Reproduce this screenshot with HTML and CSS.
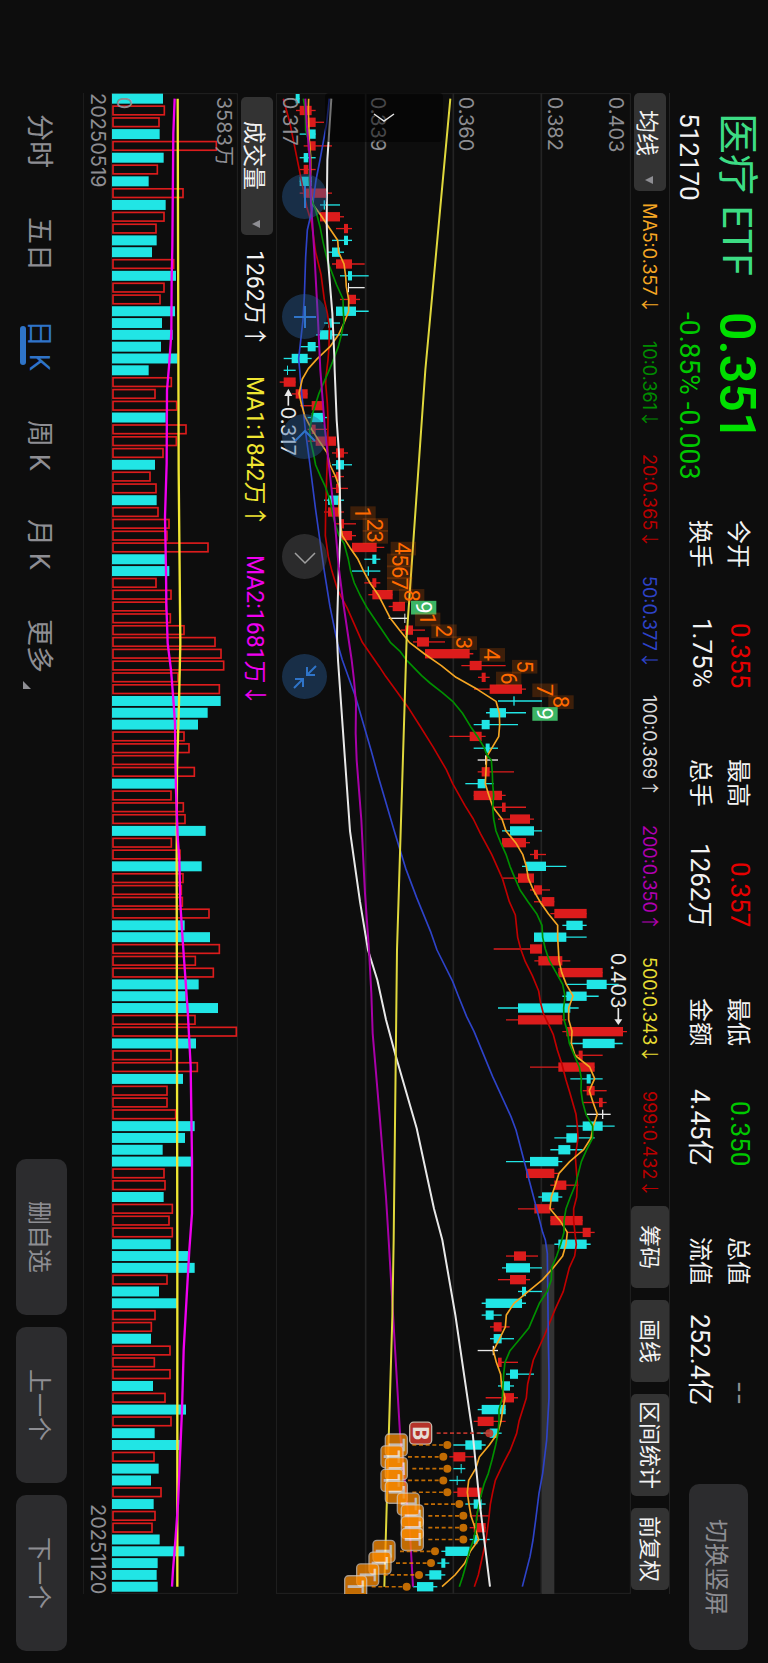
FILE: index.html
```html
<!DOCTYPE html>
<html lang="zh-CN">
<head>
<meta charset="utf-8">
<meta name="viewport" content="width=device-width, initial-scale=1">
<title>医疗 ETF 512170</title>
<link rel="stylesheet" href="styles.css">
</head>
<body>
<main class="screen">
  <header class="quote">
    <div class="quote-main">
      <h1 class="name">医疗 ETF</h1>
      <strong class="price">0.351</strong>
      <span class="code">512170</span>
      <span class="change">-0.85% -0.003</span>
    </div>
    <dl class="stats">
      <div class="stat"><dt>今开</dt><dd class="up">0.355</dd></div>
      <div class="stat"><dt>换手</dt><dd>1.75%</dd></div>
      <div class="stat"><dt>最高</dt><dd class="up">0.357</dd></div>
      <div class="stat"><dt>总手</dt><dd>1262万</dd></div>
      <div class="stat"><dt>最低</dt><dd class="down">0.350</dd></div>
      <div class="stat"><dt>金额</dt><dd>4.45亿</dd></div>
      <div class="stat"><dt>总值</dt><dd class="none">--</dd></div>
      <div class="stat"><dt>流值</dt><dd>252.4亿</dd></div>
    </dl>
    <button class="btn btn-rotate" type="button">切换竖屏</button>
  </header>

  <section class="ma-row">
    <button class="picker" type="button"><span>均线</span><svg class="caret" viewBox="0 0 8 8" aria-hidden="true"><path d="M0 4 8 0V8Z"/></svg></button>
    <div class="ma-list">
      <span class="ma5">MA5:0.357<i>↓</i></span>
      <span class="ma10">10:0.361<i>↓</i></span>
      <span class="ma20">20:0.365<i>↓</i></span>
      <span class="ma50">50:0.377<i>↓</i></span>
      <span class="ma100">100:0.369<i>↑</i></span>
      <span class="ma200">200:0.350<i>↑</i></span>
      <span class="ma500">500:0.343<i>↓</i></span>
      <span class="ma999">999:0.432<i>↓</i></span>
    </div>
    <div class="tools">
      <button class="tool" type="button">筹码</button>
      <button class="tool" type="button">画线</button>
      <button class="tool" type="button">区间统计</button>
      <button class="tool" type="button">前复权</button>
    </div>
  </section>

  <section class="chart">
    <svg id="price" class="plot" viewBox="18 39 1065 4503" role="img" aria-label="日K"></svg>
    <button class="drawer" type="button" aria-label="展开"><svg viewBox="0 0 24 12" aria-hidden="true"><path d="M2 2 12 9 22 2"/></svg></button>
    <div class="controls">
      <button class="round" type="button" aria-label="缩小"><svg viewBox="0 0 24 24" aria-hidden="true"><path d="M12 1V23"/></svg></button>
      <button class="round" type="button" aria-label="放大"><svg viewBox="0 0 24 24" aria-hidden="true"><path d="M12 1V23M1 12H23"/></svg></button>
      <button class="round" type="button" aria-label="左移"><svg viewBox="0 0 24 24" aria-hidden="true"><path d="M2 16 12 6 22 16"/></svg></button>
      <button class="round muted" type="button" aria-label="右移"><svg viewBox="0 0 24 24" aria-hidden="true"><path d="M2 8 12 18 22 8"/></svg></button>
      <button class="round" type="button" aria-label="收起"><svg viewBox="0 0 24 24" aria-hidden="true"><path d="M23 1 14 10M14 2V10H22M1 23 10 14M2 14H10V22"/></svg></button>
    </div>
  </section>

  <section class="vol-row">
    <button class="picker picker-vol" type="button"><span>成交量</span><svg class="caret" viewBox="0 0 8 8" aria-hidden="true"><path d="M0 4 8 0V8Z"/></svg></button>
    <span>1262万↑</span>
    <span class="vma1">MA1:1842万↑</span>
    <span class="vma2">MA2:1681万↓</span>
  </section>

  <section class="chart">
    <svg id="volume" class="plot" viewBox="333 39 381 4503" role="img" aria-label="成交量"></svg>
  </section>

  <div class="dates"><time>20250519</time><time>20251120</time></div>

  <footer class="bar">
    <nav class="tabs">
      <button class="tab" type="button">分时</button>
      <button class="tab" type="button">五日</button>
      <button class="tab active" type="button">日 K</button>
      <button class="tab" type="button">周 K</button>
      <button class="tab" type="button">月 K</button>
      <button class="tab more" type="button">更多<svg class="corner" viewBox="0 0 8 8" aria-hidden="true"><path d="M0 0V8H8Z"/></svg></button>
    </nav>
    <div class="actions">
      <button class="btn" type="button">删自选</button>
      <button class="btn" type="button">上一个</button>
      <button class="btn" type="button">下一个</button>
    </div>
  </footer>
</main>
<script src="chart.js"></script>
</body>
</html>
```
FILE: styles.css
```css
* { box-sizing: border-box; }

body {
  margin: 0;
  background: #0d0d0d;
  color: #f2f2f2;
  font-family: Roboto, "Noto Sans CJK SC", sans-serif;
}

button {
  margin: 0;
  padding: 0;
  border: 0;
  background: none;
  color: inherit;
  font: inherit;
  writing-mode: inherit;
  text-orientation: inherit;
  white-space: nowrap;
}

/* The view is landscape: inline axis runs down, block axis runs right to left. */
.screen {
  writing-mode: vertical-rl;
  text-orientation: sideways;
  display: grid;
  grid-template-rows: 98px 39px minmax(0, 355fr) 38px minmax(0, 127fr) 28px 83px;
  grid-template-columns: minmax(0, 1fr);
  width: 100%;
  min-height: 100vh;
  white-space: nowrap;
}

/* quote header */
.quote {
  display: flex;
  padding-inline: 113px 13px;
  padding-block-start: 8px;
}

.quote-main {
  display: grid;
  grid-template-columns: 199px 170px;
  grid-template-rows: 46px 50px;
  align-items: center;
  inline-size: 407px;
  font-size: 28px;
}

.name {
  margin: 0;
  color: #3ddc84;
  font-size: 41px;
  font-weight: 400;
  line-height: 46px;
}

.price {
  color: #00e000;
  font-size: 50px;
  font-weight: 600;
  line-height: 46px;
}

.code { font-size: 26px; }

.change, .down { color: #00c800; }
.up { color: #e60000; }

.stats {
  display: grid;
  grid-auto-flow: column;
  grid-template-rows: 38px 38px;
  grid-auto-columns: 168px;
  column-gap: 71px;
  margin: 0;
  padding-block-start: 1px;
  font-size: 26px;
}

.stat {
  display: flex;
  justify-content: space-between;
  align-items: center;
}

.stat dt { font-size: 24px; }
.stat dd { margin: 0; }
.stat .none { color: #8e8e93; font-family: Inter, sans-serif; }

.btn {
  display: flex;
  justify-content: center;
  align-items: center;
  inline-size: 156px;
  block-size: 51px;
  border-radius: 10px;
  background: #2c2c2e;
  color: #8e8e93;
  font-size: 24px;
}

.btn-rotate {
  inline-size: 166px;
  block-size: 59px;
  margin-inline-start: auto;
  margin-block-start: 12px;
}

/* moving averages */
.ma-row {
  display: flex;
  align-items: center;
  margin-inline: 93px 69px;
  padding-inline-end: 4px;
  border-block-start: 1px solid #222;
  font-size: 22px;
}

.picker {
  display: flex;
  align-items: center;
  justify-content: space-between;
  inline-size: 98px;
  block-size: 32px;
  padding-inline: 17px 7px;
  padding-block-start: 2px;
  border-radius: 5px;
  background: #333;
  font-size: 23px;
}

.picker-vol {
  inline-size: 138px;
  padding-inline: 24px 7px;
}

.caret {
  width: 8px;
  height: 8px;
  fill: #8e8e93;
}

.ma-list {
  flex: 1;
  display: flex;
  justify-content: space-between;
  align-items: center;
  padding-block-start: 2px;
  margin-inline: 12px 9px;
  font-family: Inter, sans-serif;
  font-size: 18px;
}

.ma-list i {
  font-family: "Noto Sans CJK SC", sans-serif;
  font-style: normal;
  line-height: 18px;
}

.ma5 { color: #f5a623; }
.ma10 { color: #008c00; }
.ma20, .ma999 { color: #b80000; }
.ma50 { color: #2e43c8; }
.ma100 { color: #d8d8d8; }
.ma200 { color: #b000b0; }
.ma500 { color: #e6dc32; }

.tools { display: flex; gap: 12px; block-size: 100%; }

.tool {
  display: flex;
  justify-content: center;
  align-items: center;
  min-inline-size: 82px;
  padding-inline: 7px;
  padding-block-end: 3px;
  border-radius: 5px;
  background: #333;
  font-size: 22px;
}

/* charts */
.chart {
  position: relative;
  margin-inline: 93px 69px;
}

.plot {
  display: block;
  width: 100%;
  height: 100%;
}

.plot text { writing-mode: horizontal-tb; font-family: Inter, "Noto Sans CJK SC", sans-serif; }
.plot .count, .plot .badge { font-family: Roboto, sans-serif; }

.drawer {
  position: absolute;
  top: 0;
  left: 49px;
  display: flex;
  align-items: center;
  justify-content: center;
  width: 118px;
  height: 49px;
  border-radius: 4px;
  background: rgba(0, 0, 0, 0.5);
}

.drawer svg { width: 24px; height: 12px; }

.drawer path, .round path {
  fill: none;
  stroke: #e6e6e6;
  stroke-width: 1.5;
}

.controls {
  position: absolute;
  top: 81px;
  left: 6px;
  display: flex;
  gap: 75px;
}

.round {
  display: flex;
  align-items: center;
  justify-content: center;
  width: 45px;
  height: 45px;
  border-radius: 50%;
  background: rgba(42, 98, 160, 0.4);
}

.round svg { width: 24px; height: 24px; }
.round path { stroke: #2f74c8; stroke-width: 2; }
.round.muted { background: rgba(90, 90, 92, 0.4); }
.round.muted path { stroke: #a0a0a0; stroke-width: 1.5; }

/* volume header */
.vol-row {
  display: flex;
  align-items: center;
  gap: 28px;
  padding-inline-start: 97px;
  padding-block-start: 1px;
  font-size: 23px;
}

.vol-row .picker { margin-inline-end: -13px; }
.vma1 { color: #f0e632; }
.vma2 { color: #f000f0; }

.dates {
  display: flex;
  justify-content: space-between;
  align-items: center;
  margin-inline: 93px 69px;
  border-block-end: 1px solid #1c1c1c;
  color: #8e8e93;
  font-family: Inter, sans-serif;
  font-size: 20px;
}

/* bottom bar */
.bar {
  display: flex;
  justify-content: space-between;
  align-items: center;
  padding-inline: 114px 12px;
}

.tabs {
  display: flex;
  gap: 49px;
  padding-block-start: 6px;
  color: #8e8e93;
  font-size: 27px;
}

.tab {
  position: relative;
  display: flex;
  line-height: 32px;
}

.tab.active { color: #2f74c8; }

.tab.active::after {
  content: "";
  position: absolute;
  inset-block-end: -3px;
  inset-inline: 6px;
  block-size: 6px;
  border-radius: 3px;
  background: #2f74c8;
}

.corner {
  align-self: flex-end;
  width: 8px;
  height: 8px;
  margin-inline-start: 8px;
  fill: #8e8e93;
}

.actions { display: flex; gap: 12px; }
```
FILE: chart.js
```js
// Chart space: 3 units per pixel; x is the value axis, y is the time axis.
const FIRST = 56;
const STEP = 35.43;
const at = i => FIRST + STEP * i;
const CYAN = '#21e5e5', RED = '#dc1c1c', WHITE = '#e8e8e8';
const COLORS = { c: CYAN, r: RED, w: WHITE };

// kind, wick start, body start, body end, wick end
const candles = `c77 77 89 89,r78 89 125 137,r113 113 137 162,c89 113 137 137,r101 113 137 186,c89 101 115 137,r89 101 115 137,c89 89 125 125,r89 101 174 186,c150 161 165 210,r150 150 210 222,r198 222 234 246,c186 222 234 246,c174 186 210 222,r186 198 246 284,c210 234 246 296,w234 234 237 284,r210 234 258 270,c198 198 258 296,c162 174 186 210,c138 150 186 234,c90 113 137 149,c41 65 113 125,c41 51 54 77,r29 41 77 77,r65 77 113 113,r90 125 161 161,c113 125 161 172,r113 125 137 172,r113 137 198 198,r186 198 222 234,c186 198 222 246,r186 198 210 222,r186 198 210 234,c162 174 210 222,r162 174 210 222,r198 210 222 258,r210 210 246 258,r246 246 320 343,c283 307 319 331,c246 293 297 331,r283 307 319 331,r295 307 368 368,r356 368 405 405,w356 403 406 415,r393 405 429 465,r429 441 477 525,r465 465 599 610,r574 599 635 707,r624 635 647 659,r612 659 756 768,c684 730 734 816,c648 659 708 768,c611 635 659 744,r538 599 635 647,c611 647 659 684,w623 645 650 684,r623 635 659 732,c586 623 647 671,r611 611 696 707,r671 696 707 768,r684 720 780 792,c696 720 792 816,r696 696 768 780,r780 792 804 828,c756 768 828 889,r697 744 792 792,r780 792 816 840,r792 816 853 853,r841 853 950 950,c877 889 938 950,c792 792 889 950,r671 780 816 816,r793 805 877 901,r865 865 998 998,c889 950 1010 1046,c877 889 950 986,c684 744 901 926,r708 744 877 889,r877 889 1059 1071,c901 938 1034 1058,r914 926 938 998,r780 865 974 974,c901 950 962 998,r938 950 974 1010,r938 987 998 1010,w950 996 1000 1022,c889 938 998 1034,c853 889 923 974,c841 865 901 938,c708 780 865 877,r768 768 853 865,r841 853 889 925,c805 816 865 877,r744 793 841 853,r841 841 938 938,r889 938 962 974,c853 865 950 962,r708 732 768 804,c696 708 780 816,r684 720 768 780,c744 756 768 816,c635 647 756 768,c635 647 671 695,r660 671 695 719,c660 671 695 732,w623 668 672 684,r684 684 695 744,c708 720 744 792,c684 696 720 732,r647 696 732 744,c623 635 707 707,r611 623 671 707,c623 659 684 695,c550 586 635 647,r538 550 586 611,c550 572 575 586,c538 560 563 586,r550 562 635 635,c586 611 635 647,r599 620 623 659,r599 611 647 647,c599 611 622 659,c514 526 599 599,c502 514 526 538,c466 478 514 526,c429 441 490 502`
  .split(',').map(s => [s[0], ...s.slice(1).split(' ').map(Number)]);

const volumes = 'c489 r495 r479 c479 r651 c491 r474 c446 r551 c497 r494 r470 c470 c456 r523 c528 r494 r482 c525 c486 c518 c483 c533 c446 r516 r467 r532 c497 r560 r531 r491 c465 r452 r470 c470 r476 r509 r503 r626 c495 c508 r470 r515 r500 r513 r554 r647 r665 r673 r536 r660 c662 c623 c594 r554 r569 r530 r585 c527 r515 r552 r557 c617 r516 r542 c605 r551 r546 r549 r629 c554 c630 r660 r588 r642 c596 c557 c654 r587 r711 c588 r515 r594 c549 r503 r503 r529 c584 c555 c488 c573 r494 r497 c491 r519 r509 r519 c512 c564 c584 r503 c477 c531 r467 r456 c453 r512 r465 r512 c459 r497 c558 r515 c464 c541 r464 c476 c453 r485 c461 r467 r458 c479 c553 c473 c470 c473'
  .split(' ').map(s => [s[0], Number(s.slice(1))]);

// Each line is a list of segments: [y base, points].
const lines = [
  { color: '#c00000', width: 5, parts: [
    [0, '40,56 60,130 80,230 98,320 110,380 125,430 137,517 153,583 163,659 172,700 178,740 177,800 174,840 168,890'],
    [870, '167,40 172,100 174,143 173,249 170,320 167,427 166,497 175,560 186,604 203,660 232,715 277,817 328,890'],
    [1740, '347,49 383,98 413,140 450,198 490,262 529,329 548,371 585,437 610,477 631,520 665,583 697,655 718,725 736,765 743,832 752,867'],
    [2610, '766,35 787,77 806,123 812,160 820,190 850,254 862,300 875,340 888,390 900,430 918,493 922,528 924,564 916,620 922,700 920,741 911,776 911,812 916,860'],
    [3480, '919,13 914,48 898,83 880,154 855,209 824,285 790,360 773,432 769,474 747,544 740,580 721,630 700,670 676,721 668,757 661,793 656,840 648,900 635,960 625,1005 613,1040']] },
  { color: '#2e43c8', width: 5, parts: [
    [0, '178,56 170,130 150,240 138,300 126,390 112,450 107,530 103,650 99,720 90,800 86,836'],
    [870, '89,0 93,50 106,180 120,285 137,420 151,520 163,604 180,710 203,822'],
    [1740, '217,0 257,112 303,270 325,350 372,510 407,625 440,713 483,818'],
    [2610, '501,0 548,94 565,138 590,200 612,244 668,380 723,500 738,540 772,670 800,776 818,847'],
    [3480, '826,0 832,40 835,300 837,400 837,474 830,600 818,700 807,760 797,840 789,900 780,950 757,1040']] },
  { color: '#f5a623', width: 5, parts: [
    [0, '116,56 115,90 118,180 122,230 122,275 120,310 124,350 130,375 150,402 172,435 203,481 206,517 222,552 227,588 229,620 236,659 236,694 222,729 205,765 180,800 142,836 115,866'],
    [870, '97,27 87,70 95,105 105,140 125,178 148,214 172,249 180,285 197,320 210,356 207,391 207,427 211,462 217,497 240,533 264,568 281,604 300,639 325,675 343,710 361,745 389,781 418,817 464,852 514,887'],
    [1740, '558,52 622,88 678,124 688,159 689,195 686,230 665,265 650,290 646,371 657,407 669,442 696,477 708,513 737,548 758,583 769,619 775,655 790,690 810,725 835,761 863,796 863,832 865,867'],
    [2610, '867,32 875,67 889,103 909,138 896,174 896,209 906,244 904,280 915,316 959,351 974,386 958,422 969,457 982,493 970,528 963,564 941,599 899,635 867,670 856,705 844,741 840,776 870,812 892,847'],
    [3480, '888,13 878,48 850,83 818,119 775,154 732,190 709,225 706,261 689,296 670,332 679,367 692,403 695,438 705,474 698,509 693,544 683,580 658,615 628,651 617,686 596,721 592,757 597,793 603,828 615,863 626,899 601,934 584,970 555,1005 516,1040']] },
  { color: '#009000', width: 5, parts: [
    [0, '100,56 106,90 107,150 115,180 120,230 118,300 121,350 137,390 150,440 160,490 173,545 200,615 219,657 220,694 222,725 214,765 205,800 188,845'],
    [870, '176,4 147,70 128,130 119,180 122,214 130,249 137,285 152,320 166,350 180,391 192,450 207,497 222,520 235,568 242,604 253,639 270,675 292,715 330,771 361,817 391,845'],
    [1740, '411,2 455,47 480,69 517,98 548,124 577,159 602,200 623,230 642,262 652,287 664,300 667,340 668,371 671,407 668,442 671,477 678,513 692,548 708,583 720,619 735,655 750,690 774,725 800,761 816,796 818,832 826,867'],
    [2610, '838,32 858,67 878,103 885,138 881,174 882,209 892,244 898,280 913,316 928,351 934,386 933,422 938,457 948,493 968,528 968,564 950,599 934,635 925,670 916,705 901,741 888,776 882,812 882,847'],
    [3480, '872,13 860,48 845,83 844,119 832,154 808,190 790,232 777,263 750,296 720,332 705,367 701,403 697,474 687,509 687,544 684,580 677,615 666,660 655,700 643,730 632,770 620,828 618,863 611,899 598,934 588,975 578,1010 568,1040']] },
  { color: '#e8e8e8', width: 6, parts: [
    [0, '184,56 172,240 170,430 174,540 187,700 193,830'],
    [870, '194,0 200,150 207,249 211,427 211,497 206,600 202,740 201,800'],
    [1740, '204,0 218,200 240,513 270,725'],
    [2610, '294,0 322,90 348,209 375,310 440,535 492,776'],
    [3480, '517,0 556,225 608,580 628,780 660,1040']] },
  { color: '#a800a8', width: 6, parts: [
    [0, '106,56 110,130 120,240 123,370 133,517 145,740'],
    [870, '151,0 165,180 185,360 195,462 206,590 220,700'],
    [1740, '245,0 252,60 258,130 257,220 260,300 274,480 285,700'],
    [2610, '297,0 304,130 308,250 330,510 348,741'],
    [3480, '356,0 390,580 420,880 429,1040']] },
  { color: '#e0d83c', width: 6, parts: [
    [0, '541,56 466,870'],
    [870, '410,800'],
    [1740, '408,0 381,870'],
    [2610, '371,870'],
    [3480, '367,230 353,700 343,1040']] }
];

const volumeLines = [
  { color: '#f0e632', width: 7, parts: [
    [0, '533,56 536,1170'],
    [1170, '541,520 537,700 531,900'],
    [2340, '530,0 532,1170'],
    [3510, '532,1010']] },
  { color: '#f000f0', width: 7, parts: [
    [0, '524,56 520,160 517,500 515,600 514,760 507,860 501,930 500,1150'],
    [1170, '495,140 498,300 499,400 503,520 513,600 521,700 525,760 526,860 528,960 533,1100'],
    [2340, '538,0 541,130 548,240 563,450 572,620 576,900 576,1060'],
    [3510, '568,0 560,140 551,300 546,480 540,620 534,760 527,860 519,960 516,1010']] }
];

const rect = (x, y, w, h, attrs) => `<rect x="${x}" y="${y}" width="${w}" height="${h}" ${attrs}/>`;
const seg = (x1, y1, x2, y2, attrs) => `<path d="M${x1} ${y1}L${x2} ${y2}" ${attrs}/>`;
const label = (x, y, size, fill, text, extra = '') =>
  `<text transform="translate(${x} ${y}) rotate(90)" font-size="${size}" fill="${fill}" ${extra}>${text}</text>`;

function curve({ color, width, parts }) {
  const pts = parts.flatMap(([base, s]) => s.split(' ').map(p => {
    const [x, y] = p.split(',').map(Number);
    return `${x},${y + base}`;
  }));
  return `<polyline points="${pts.join(' ')}" fill="none" stroke="${color}" stroke-width="${width}" stroke-linejoin="round"/>`;
}

function drawPrice() {
  let out = '';
  for (const x of [287, 550, 814]) out += seg(x, 39, x, 4542, 'stroke="#242424" stroke-width="5"');
  out += rect(19, 41, 1062, 4499, 'fill="none" stroke="#222" stroke-width="3"');
  out += rect(816, 3493, 37, 1049, 'fill="#333"');

  candles.forEach(([kind, w1, b1, b2, w2], i) => {
    const y = at(i), color = COLORS[kind];
    out += seg(w1, y, w2, y, `stroke="${color}" stroke-width="4"`);
    out += rect(b1, y - 14, b2 - b1, 28, `fill="${color}"`);
  });
  lines.forEach(l => { out += curve(l); });

  [[38, '0.317'], [303, '0.339'], [567, '0.360'], [833, '0.382'], [1017, '0.403']]
    .forEach(([x, t]) => { out += label(x, 50, 60, '#8e8e93', t); });

  out += label(32, 980, 60, WHITE, '0.317');
  out += seg(55, 940, 55, 977, `stroke="${WHITE}" stroke-width="5"`) + `<path d="M55 926 43 948H67Z" fill="${WHITE}"/>`;
  out += label(1023, 2618, 60, WHITE, '0.403');
  out += seg(1045, 2784, 1045, 2822, `stroke="${WHITE}" stroke-width="5"`) + `<path d="M1045 2835 1033 2818H1057Z" fill="${WHITE}"/>`;

  // sequence counters beside candles 35 to 52
  [241, 278, 278, 362, 351, 351, 351, 387, 423, 435, 484, 545, 629, 726, 678, 787, 835, 787].forEach((x, k) => {
    const y = at(35 + k) + 3, n = k % 9 + 1, last = n === 9;
    out += rect(x, y - 20, 76, 41, last ? 'fill="#3cb464"' : 'fill="#ff6a00" fill-opacity=".2"');
    out += label(x + 14, y, 66, last ? '#fff' : '#ff6a00', n, 'class="count" text-anchor="middle"');
  });

  // trade markers beside candles 113 to 126: badge x, dot x
  [[452, 658], [379, 532], [366, 520], [379, 532], [366, 520], [379, 532], [415, 568], [427, 580], [427, 580], [427, 580], [342, 495], [330, 483], [293, 447], [257, 410]].forEach(([bx, dx], k) => {
    const y = at(113 + k), buy = k === 0, tone = buy ? '#c8382e' : '#ff8c00';
    out += `<g opacity="${buy ? 0.9 : 0.75}">`;
    out += seg(bx + 48, y, dx - 12, y, `stroke="${tone}" stroke-width="5" stroke-dasharray="12 8"`);
    out += `<circle cx="${dx}" cy="${y}" r="12" fill="${tone}"/>`;
    out += rect(bx - 33, y - 33, 66, 66, `rx="12" fill="${tone}" stroke="#d8c8b8" stroke-width="4"`);
    out += label(bx - 23, y, 66, '#fff4ea', buy ? 'B' : 'T', `class="badge" text-anchor="middle" font-weight="${buy ? 700 : 500}"`) + '</g>';
  });
  document.getElementById('price').innerHTML = out;
}

function drawVolume() {
  let out = rect(334, 41, 378, 4499, 'fill="none" stroke="#222" stroke-width="3"');
  volumes.forEach(([kind, end], i) => {
    const y = at(i);
    out += kind === 'c'
      ? rect(336, y - 15, end - 336, 30, `fill="${CYAN}"`)
      : rect(339, y - 13, end - 341, 26, `fill="none" stroke="${RED}" stroke-width="5"`);
  });
  volumeLines.forEach(l => { out += curve(l); });
  out += label(350, 50, 60, '#8e8e93', '0');
  out += label(652, 50, 60, '#8e8e93', '3583万');
  document.getElementById('volume').innerHTML = out;
}

drawPrice();
drawVolume();
```
